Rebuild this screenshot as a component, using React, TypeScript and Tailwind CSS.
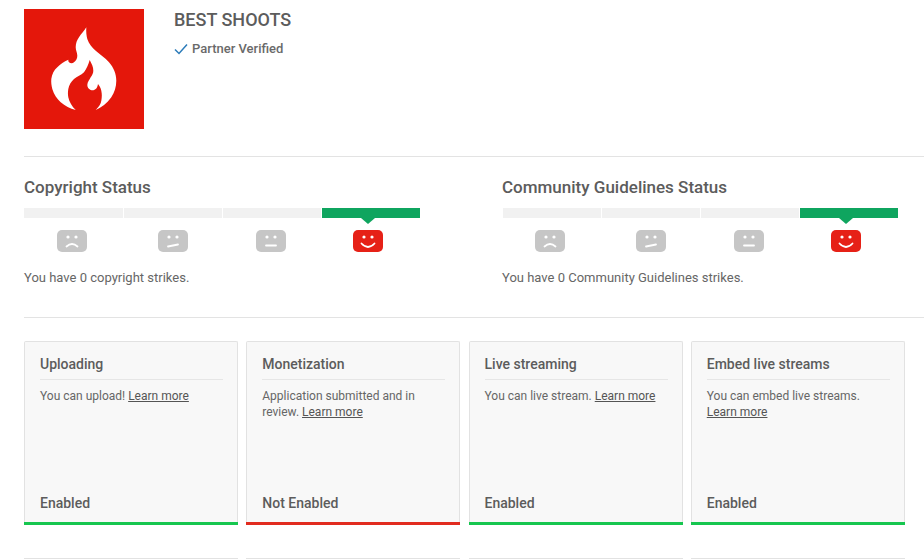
const faces = [
  { mouth: 'M9.5 16.5 Q15 11.5 20.5 16.5', ml: 'ml-[33px]', bg: 'bg-[#c6c6c6]' },
  { mouth: 'M10 16.5 L20 14.5', ml: 'ml-[71px]', bg: 'bg-[#c6c6c6]' },
  { mouth: 'M10 15.5 L20 15.5', ml: 'ml-[68px]', bg: 'bg-[#c6c6c6]' },
  { mouth: 'M8.5 13.5 Q15 20.5 21.5 13.5', ml: 'ml-[67px]', bg: 'bg-[#e62117]' },
];

function Face({ mouth, ml, bg }: { mouth: string; ml: string; bg: string }) {
  return (
    <div className={`${ml} ${bg} w-[30px] h-[22px] rounded-[5px]`}>
      <svg width="30" height="22" viewBox="0 0 30 22" fill="none">
        <circle cx="11" cy="7" r="1.6" fill="#fff" />
        <circle cx="19" cy="7" r="1.6" fill="#fff" />
        <path d={mouth} stroke="#fff" strokeWidth="1.8" strokeLinecap="round" />
      </svg>
    </div>
  );
}

function StatusBlock({ title, text, first, className }: { title: string; text: string; first: string; className?: string }) {
  return (
    <div className={className}>
      <h2 className="text-[17px] leading-[20px] font-medium text-[#5c5c5c]">{title}</h2>
      <div className="flex gap-px mt-[11px] w-[396px]">
        <div className={`${first} h-[10px] bg-[#f1f1f1]`} />
        <div className="w-[98px] h-[10px] bg-[#f1f1f1]" />
        <div className="w-[98px] h-[10px] bg-[#f1f1f1]" />
        <div className="relative w-[98px] h-[10px] bg-[#0fa55f]">
          <div className="absolute left-[39px] top-[10px] w-0 h-0 border-x-[7px] border-x-transparent border-t-[6px] border-t-[#0fa55f]" />
        </div>
      </div>
      <div className="flex mt-[12px]">
        {faces.map((f, i) => (
          <Face key={i} {...f} />
        ))}
      </div>
      <p className="mt-[18px] text-[13px] leading-[16px] text-[#666]">{text}</p>
    </div>
  );
}

function Card({ title, status, bar, children }: { title: string; status: string; bar: string; children: React.ReactNode }) {
  return (
    <div className="w-[214px] h-[184px] shrink-0 flex flex-col bg-[#f8f8f8] border border-[#e2e2e2] border-b-0 rounded-t-[2px] px-[15px] pt-[12px]">
      <h3 className="text-[14px] leading-[20px] font-medium text-[#5c5c5c] pb-[5px] border-b border-[#e6e6e6] mr-[-1px]">{title}</h3>
      <p className="mt-[8px] text-[12px] leading-[16px] text-[#666]">{children}</p>
      <div className="mt-auto text-[14px] leading-[20px] font-medium text-[#5c5c5c] mb-[9px]">{status}</div>
      <div className={`${bar} h-[3px] mx-[-16px]`} />
    </div>
  );
}

function Learn() {
  return <a className="underline text-[#555]">Learn more</a>;
}

export default function App() {
  return (
    <div className="h-[559px] overflow-hidden bg-white font-['Roboto',sans-serif]">
      <div className="flex pl-[24px] pt-[9px] h-[156px]">
        <div className="w-[120px] h-[120px] bg-[#e4170b] shrink-0">
          <svg width="120" height="120" viewBox="0 0 120 120">
            <path
              fill="#fff"
              d="M62.3 18.3 C62 23 62.5 27 63.3 30 C65 35 68 38.5 71.7 41.7 C76 45.5 81 48.5 85 53.3 C89.5 58.5 92.3 64.5 92.3 71.7 C92.3 78 90.5 83.5 87.3 88.3 C83 94.5 77.5 98.5 71.7 101 C75 97.5 77 95 77.3 91.7 C78 88 78 85 77.3 81.7 C76.8 79 75.5 77 74 75 C73.5 77.5 73 79 71.7 80 C70 81.5 68.3 81.5 66.7 81 C64.5 80 63.3 78 63.3 76 C63.5 73 65.3 71 66.7 68.3 C68.3 66 69.3 64 69.3 61.7 C69.5 58 67.5 54.5 65.7 51 C64.5 55.5 62.5 60 60 63.3 C57 66.5 53 67.5 50 70 C47 72.8 45 76 44.3 80 C43.8 83 43.8 85.5 44.3 88.3 C45.3 93 48 97.5 51.7 101 C46 99.5 41 97 36.7 93.3 C33 90 30 85.5 28.3 80 C27.5 76.5 27 73.5 27.3 70 C28 65 30 61 33.3 58.3 C36.5 55 40 52.5 44.3 50.7 C44.2 51.8 44.4 52.7 45 53.3 C46.5 54.5 48.5 54.5 50 53.3 C52 51.8 53.3 49.5 53.3 46.7 C53.3 43.5 51.7 41.5 51.7 38.3 C51.7 34.5 53 31 55 28.3 C57 25 60 22 62.3 18.3 Z"
            />
          </svg>
        </div>
        <div className="ml-[30px]">
          <h1 className="text-[18px] leading-[22px] font-medium text-[#5c5c5c]">BEST SHOOTS</h1>
          <div className="flex items-center mt-[10px] text-[13px] leading-[16px] font-medium text-[#6a6a6a]">
            <svg width="14" height="12" viewBox="0 0 14 12" fill="none" className="mr-[4px]">
              <path d="M1 6.5 L5 10.5 L13 1.5" stroke="#2b7bb9" strokeWidth="1.5" />
            </svg>
            Partner Verified
          </div>
        </div>
      </div>

      <div className="ml-[24px] border-t border-[#e3e3e3] h-[161px] flex pt-[20px]">
        <StatusBlock title="Copyright Status" text="You have 0 copyright strikes." first="w-[99px]" className="w-[478px]" />
        <StatusBlock title="Community Guidelines Status" text="You have 0 Community Guidelines strikes." first="w-[98px] ml-px" />
      </div>

      <div className="ml-[24px] border-t border-[#e3e3e3] pt-[23px]">
        <div className="flex gap-[8.25px]">
          <Card title="Uploading" status="Enabled" bar="bg-[#16c64f]">
            You can upload! <Learn />
          </Card>
          <Card title="Monetization" status="Not Enabled" bar="bg-[#e12b1f]">
            Application submitted and in review. <Learn />
          </Card>
          <Card title="Live streaming" status="Enabled" bar="bg-[#16c64f]">
            You can live stream. <Learn />
          </Card>
          <Card title="Embed live streams" status="Enabled" bar="bg-[#16c64f]">
            You can embed live streams. <Learn />
          </Card>
        </div>
        <div className="flex gap-[8.25px] mt-[33px]">
          <div className="w-[214px] h-[40px] bg-[#f8f8f8] border border-[#e2e2e2]" />
          <div className="w-[214px] h-[40px] bg-[#f8f8f8] border border-[#e2e2e2]" />
          <div className="w-[214px] h-[40px] bg-[#f8f8f8] border border-[#e2e2e2]" />
          <div className="w-[214px] h-[40px] bg-[#f8f8f8] border border-[#e2e2e2]" />
        </div>
      </div>
    </div>
  );
}
